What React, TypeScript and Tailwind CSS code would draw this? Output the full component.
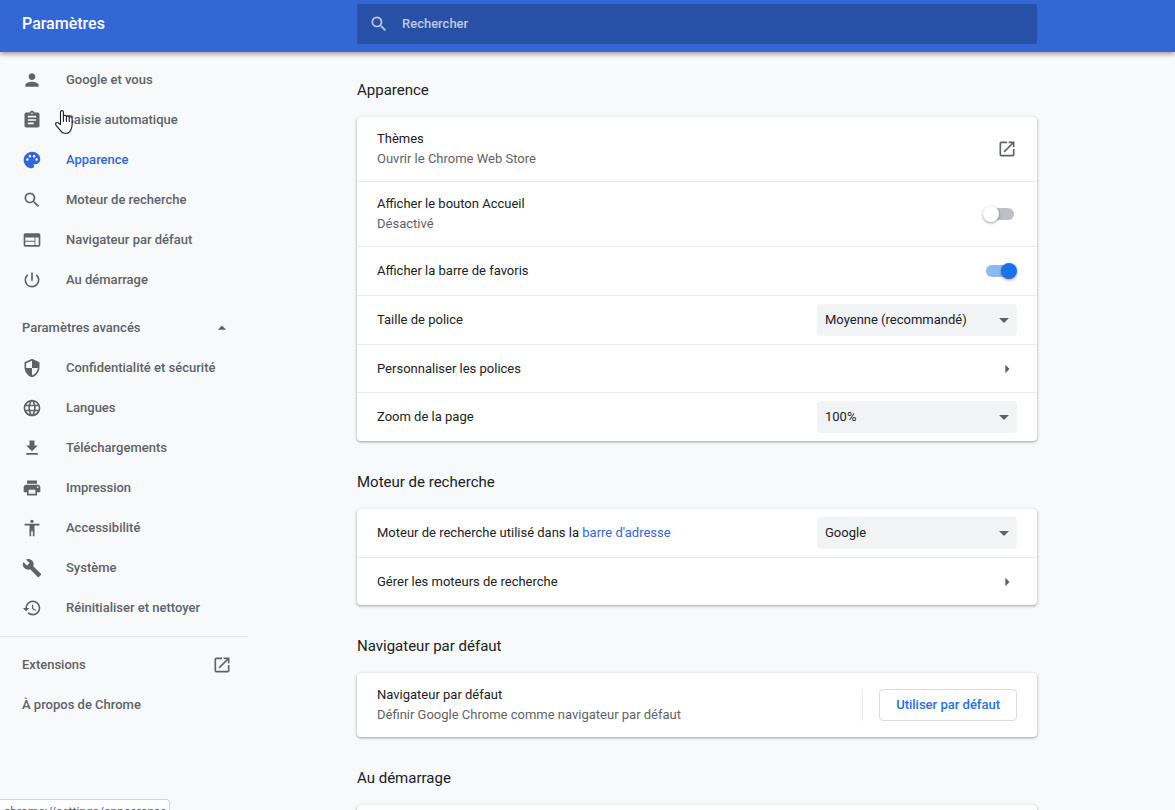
import { useState } from 'react';
import type { ReactNode } from 'react';
import type { IconType } from 'react-icons';
import {
  MdAccessibility,
  MdArrowDropDown,
  MdArrowDropUp,
  MdArrowRight,
  MdAssignment,
  MdBuild,
  MdFileDownload,
  MdLanguage,
  MdOpenInNew,
  MdPalette,
  MdPerson,
  MdPowerSettingsNew,
  MdPrint,
  MdRestore,
  MdSearch,
  MdSecurity,
  MdWeb,
} from 'react-icons/md';

type MenuItem = { id: string; label: string; icon: IconType };

const basicItems: MenuItem[] = [
  { id: 'people', label: 'Google et vous', icon: MdPerson },
  { id: 'autofill', label: 'Saisie automatique', icon: MdAssignment },
  { id: 'appearance', label: 'Apparence', icon: MdPalette },
  { id: 'search', label: 'Moteur de recherche', icon: MdSearch },
  { id: 'defaultBrowser', label: 'Navigateur par défaut', icon: MdWeb },
  { id: 'onStartup', label: 'Au démarrage', icon: MdPowerSettingsNew },
];

const advancedItems: MenuItem[] = [
  { id: 'privacy', label: 'Confidentialité et sécurité', icon: MdSecurity },
  { id: 'languages', label: 'Langues', icon: MdLanguage },
  { id: 'downloads', label: 'Téléchargements', icon: MdFileDownload },
  { id: 'printing', label: 'Impression', icon: MdPrint },
  { id: 'accessibility', label: 'Accessibilité', icon: MdAccessibility },
  { id: 'system', label: 'Système', icon: MdBuild },
  { id: 'reset', label: 'Réinitialiser et nettoyer', icon: MdRestore },
];

function MenuLink({ item, active, onSelect }: { item: MenuItem; active: boolean; onSelect: (id: string) => void }) {
  const Icon = item.icon;
  return (
    <a
      href={`#${item.id}`}
      onClick={() => onSelect(item.id)}
      className={`flex h-10 items-center gap-6 pl-[22px] ${active ? 'text-[#3367d6]' : 'text-[#5f6368]'}`}
    >
      <Icon className="h-5 w-5 shrink-0" />
      <span>{item.label}</span>
    </a>
  );
}

function Section({ title, children }: { title: string; children: ReactNode }) {
  return (
    <section>
      <h2 className="pt-[31px] pb-[17px] text-[15px] leading-5 text-[#202124]">{title}</h2>
      <div className="divide-y divide-[#e8eaed] rounded bg-white shadow-[0_1px_2px_0_rgba(60,64,67,0.3),0_1px_3px_1px_rgba(60,64,67,0.15)]">
        {children}
      </div>
    </section>
  );
}

function Toggle({ id, checked, onChange }: { id: string; checked: boolean; onChange: (value: boolean) => void }) {
  return (
    <input
      id={id}
      type="checkbox"
      checked={checked}
      onChange={(e) => onChange(e.target.checked)}
      className="relative h-4 w-[34px] shrink-0 cursor-pointer appearance-none before:absolute before:inset-x-[3px] before:inset-y-[2px] before:rounded-full before:bg-[#bdc1c6] after:absolute after:top-0 after:left-0 after:h-4 after:w-4 after:rounded-full after:bg-white after:shadow-[0_1px_3px_0_rgba(0,0,0,0.4)] checked:before:bg-[#8cb8f4] checked:after:right-0 checked:after:left-auto checked:after:bg-[#1a73e8]"
    />
  );
}

function Dropdown({ id, options }: { id: string; options: string[] }) {
  return (
    <div className="relative w-[200px] shrink-0">
      <select id={id} className="block h-8 w-full appearance-none rounded bg-[#f1f3f4] pr-6 pl-2 text-[#202124]">
        {options.map((option) => (
          <option key={option}>{option}</option>
        ))}
      </select>
      <MdArrowDropDown className="pointer-events-none absolute top-1 right-px h-6 w-6 text-[#5f6368]" />
    </div>
  );
}

function LinkRow({ label }: { label: string }) {
  return (
    <div>
      <button type="button" className="flex min-h-[47px] w-full items-center justify-between px-5 text-left">
        <span>{label}</span>
        <MdArrowRight className="h-5 w-5 text-[#5f6368]" />
      </button>
    </div>
  );
}

function HandCursor() {
  return (
    <svg
      viewBox="0 0 18 24"
      className="pointer-events-none absolute top-[110px] left-[55px] z-20 h-6 w-[18px]"
      fill="#fff"
      stroke="#1b1b2b"
      strokeWidth="1.1"
      strokeLinejoin="round"
      strokeLinecap="round"
    >
      <path d="M5.5 14.500V2.200C5.500 1.200 6 .6 6.900.6s1.500.6 1.500 1.600V6.300C8.600 5.600 9.200 5.300 9.900 5.300c.8 0 1.400.5 1.500 1.400.2-.5.7-.8 1.300-.8.8 0 1.400.5 1.500 1.400.3-.4.700-.5 1.100-.5 1.100 0 1.800.6 1.800 1.600V15c0 2.200-.5 3.200-1.100 4.400-.9 2-2.300 3.900-4.700 3.900H9.600c-2.100 0-3.200-1-4.300-3L1.300 15.600c-.9-1.300-.8-2.300-.1-2.800.8-.5 1.700-.3 2.500.4z" />
      <path d="M8.400 6.300v5.200M11.400 6.700v4.800M14.200 7.300v4.300" fill="none" />
    </svg>
  );
}

export default function App() {
  const [current, setCurrent] = useState('appearance');
  const [advancedOpen, setAdvancedOpen] = useState(true);
  const [showHome, setShowHome] = useState(false);
  const [showBookmarks, setShowBookmarks] = useState(true);

  return (
    <div className="relative flex h-screen flex-col overflow-hidden bg-[#f8f9fb] font-['Roboto',sans-serif] text-[13px] leading-5 text-[#202124]">
      <header className="z-10 flex shrink-0 items-center bg-[#3367d6] pt-1 pb-2 shadow-[0_2px_5px_0_rgba(0,0,0,0.4)]">
        <div className="flex-[1_0_219px] pl-[22px]">
          <h1 className="text-base leading-6 font-medium text-white">Paramètres</h1>
        </div>
        <label className="flex h-10 flex-[0_1_680px] items-center gap-[13px] rounded-xs bg-[#2850a7] pl-3 text-white/70">
          <MdSearch className="h-5 w-5 shrink-0" />
          <input
            type="search"
            aria-label="Rechercher"
            placeholder="Rechercher"
            className="w-full bg-transparent font-medium text-white outline-none placeholder:text-white/70"
          />
        </label>
        <div className="flex-[1_1_0px]" />
      </header>

      <div className="flex min-h-0 flex-1">
        <div className="flex-[1_0_219px]">
          <nav className="w-[248px] pt-2 font-medium text-[#5f6368]">
            {basicItems.map((item) => (
              <MenuLink key={item.id} item={item} active={item.id === current} onSelect={setCurrent} />
            ))}
            <button
              type="button"
              onClick={() => setAdvancedOpen(!advancedOpen)}
              className="flex h-12 w-full items-center justify-between pt-2 pr-4 pl-[22px]"
            >
              <span>Paramètres avancés</span>
              {advancedOpen ? <MdArrowDropUp className="h-5 w-5" /> : <MdArrowDropDown className="h-5 w-5" />}
            </button>
            {advancedOpen &&
              advancedItems.map((item) => (
                <MenuLink key={item.id} item={item} active={item.id === current} onSelect={setCurrent} />
              ))}
            <hr className="my-2 border-[#e0e2e6]" />
            <a href="#extensions" className="flex h-10 items-center justify-between pr-4 pl-[22px]">
              <span>Extensions</span>
              <MdOpenInNew className="h-5 w-5" />
            </a>
            <a href="#help" className="flex h-10 items-center pl-[22px]">
              À propos de Chrome
            </a>
          </nav>
        </div>

        <main className="-mt-[3px] flex-[0_1_680px]">
          <Section title="Apparence">
            <div className="box-content flex min-h-16 items-center justify-between px-5">
              <div>
                <div>Thèmes</div>
                <div className="text-[#5f6368]">Ouvrir le Chrome Web Store</div>
              </div>
              <a href="#themes" aria-label="Ouvrir le Chrome Web Store">
                <MdOpenInNew className="h-5 w-5 text-[#5f6368]" />
              </a>
            </div>
            <div className="box-content flex min-h-16 items-center justify-between px-5">
              <label htmlFor="show-home">
                <span className="block">Afficher le bouton Accueil</span>
                <span className="block text-[#5f6368]">{showHome ? 'Activé' : 'Désactivé'}</span>
              </label>
              <Toggle id="show-home" checked={showHome} onChange={setShowHome} />
            </div>
            <div className="box-content flex min-h-12 items-center justify-between px-5">
              <label htmlFor="show-bookmarks">Afficher la barre de favoris</label>
              <Toggle id="show-bookmarks" checked={showBookmarks} onChange={setShowBookmarks} />
            </div>
            <div className="box-content flex min-h-12 items-center justify-between px-5">
              <label htmlFor="font-size">Taille de police</label>
              <Dropdown id="font-size" options={['Moyenne (recommandé)']} />
            </div>
            <LinkRow label="Personnaliser les polices" />
            <div className="box-content flex min-h-12 items-center justify-between px-5">
              <label htmlFor="page-zoom">Zoom de la page</label>
              <Dropdown id="page-zoom" options={['100%']} />
            </div>
          </Section>

          <Section title="Moteur de recherche">
            <div className="box-content flex min-h-12 items-center justify-between px-5">
              <label htmlFor="search-engine">
                Moteur de recherche utilisé dans la{' '}
                <a href="#omnibox" className="text-[#3367d6]">
                  barre d'adresse
                </a>
              </label>
              <Dropdown id="search-engine" options={['Google']} />
            </div>
            <LinkRow label="Gérer les moteurs de recherche" />
          </Section>

          <Section title="Navigateur par défaut">
            <div className="box-content flex min-h-16 items-center px-5">
              <div className="flex-1">
                <div>Navigateur par défaut</div>
                <div className="text-[#5f6368]">Définir Google Chrome comme navigateur par défaut</div>
              </div>
              <div className="border-l border-[#e8eaed] pl-4">
                <button
                  type="button"
                  className="block h-8 rounded border border-[#dadce0] px-4 font-medium text-[#1a73e8]"
                >
                  Utiliser par défaut
                </button>
              </div>
            </div>
          </Section>

          <Section title="Au démarrage">
            <div className="min-h-12" />
          </Section>
        </main>
        <div className="flex-[1_1_0px]" />
      </div>

      <div className="absolute bottom-0 left-0 z-10 h-[11px] w-[170px] overflow-hidden rounded-tr border-t border-r border-[#d0d2d5] bg-white pl-1 text-xs leading-6 text-[#5f6368]">
        chrome://settings/appearance
      </div>
      <HandCursor />
    </div>
  );
}
